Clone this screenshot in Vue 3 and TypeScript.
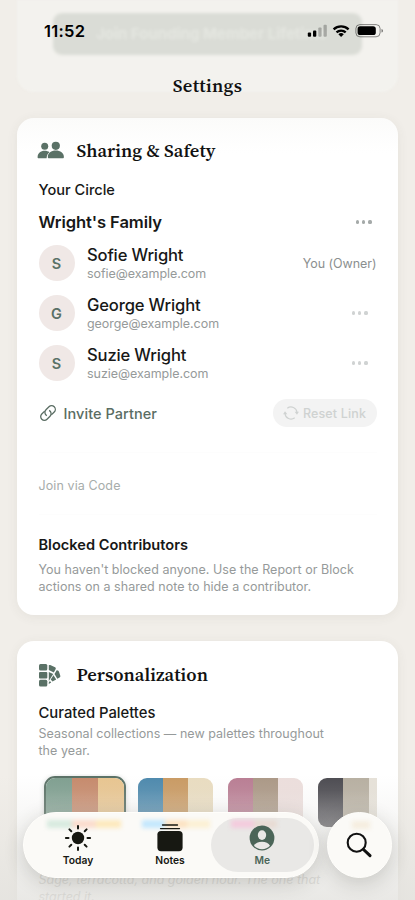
<script setup lang="ts">
interface Member { initial: string; name: string; email: string; owner?: boolean }
interface Palette { name: string; colors: string[]; selected?: boolean }

const members: Member[] = [
  { initial: 'S', name: 'Sofie Wright', email: 'sofie@example.com', owner: true },
  { initial: 'G', name: 'George Wright', email: 'george@example.com' },
  { initial: 'S', name: 'Suzie Wright', email: 'suzie@example.com' },
]

const palettes: Palette[] = [
  { name: 'signature', colors: ['#7f9f90', '#c68a6c', '#e8c590'], selected: true },
  { name: 'coastal', colors: ['#4d89ad', '#c99a63', '#e9dcc0'] },
  { name: 'rose', colors: ['#b97d93', '#ab9886', '#ecdedc'] },
  { name: 'desert', colors: ['#4c4b51', '#b7afa1', '#e6e1d8'] },
]
</script>

<template>
  <div class="screen">
    <main class="content">
      <section class="card sharing">
        <header class="heading">
          <svg class="people" width="28" height="20" viewBox="0 0 28 20">
            <circle cx="7.7" cy="5.2" r="3.5" />
            <path d="M.6 16.2c0-3.8 3-6.4 7.1-6.4 1.9 0 3.500.5 4.800 1.500-1.700 1.300-2.700 3-2.900 6H1.700c-.8 0-1.100-.4-1.100-1.100z" />
            <circle cx="18.8" cy="4.8" r="4.1" />
            <path d="M10.8 16c0-4 3.4-6.5 8-6.5s8.1 2.5 8.1 6.5c0 .9-.4 1.3-1.3 1.3H12c-.8 0-1.2-.4-1.2-1.3z" />
          </svg>
          <h2 class="h-share">Sharing &amp; Safety</h2>
        </header>
        <h3 class="circle">Your Circle</h3>
        <div class="family">
          <span>Wright's Family</span>
          <i class="dots strong"><b></b><b></b><b></b></i>
        </div>
        <ul class="members">
          <li v-for="m in members" :key="m.email">
            <span class="avatar">{{ m.initial }}</span>
            <div class="who">
              <strong>{{ m.name }}</strong>
              <small>{{ m.email }}</small>
            </div>
            <span v-if="m.owner" class="owner">You (Owner)</span>
            <i v-else class="dots"><b></b><b></b><b></b></i>
          </li>
        </ul>
        <div class="invite">
          <svg width="18" height="18" viewBox="0 0 18 18">
            <g transform="rotate(-45 9 9)">
              <path d="M8 5.300H3.900a3.700 3.700 0 0 0 0 7.400h4.300a3.700 3.700 0 0 0 3.500-4.800" />
              <path d="M10 12.700h4.100a3.700 3.700 0 0 0 0-7.400H9.800a3.700 3.700 0 0 0-3.500 4.800" />
            </g>
          </svg>
          <span class="partner">Invite Partner</span>
          <button class="reset">
            <svg width="16" height="16" viewBox="0 0 16 16">
              <path d="M4.3 3.2A6 6 0 0 1 14 7.5M11.7 12.8A6 6 0 0 1 2 8.5" />
              <path class="tip" d="M11.7 6.8h4.2L14 9.8zM.1 9.2h4.2L2 6.2z" />
            </svg>
            <span>Reset Link</span>
          </button>
        </div>
        <div class="join">Join via Code</div>
        <h3 class="blocked">Blocked Contributors</h3>
        <p class="note">You haven't blocked anyone. Use the Report or Block<br>actions on a shared note to hide a contributor.</p>
      </section>

      <section class="card personal">
        <header class="heading">
          <svg class="swatch" width="28" height="26" viewBox="0 0 28 26">
            <rect x="2" y="2" width="8.3" height="6.6" rx="1.5" />
            <rect x="2" y="10" width="8.3" height="6.4" rx="1" />
            <rect x="2" y="17.8" width="8.3" height="6.7" rx="1.5" />
            <path d="M11.8 3.2q.6-.5 1.4-.1l4.9 2.2q1.1.5.6 1.6l-1.9 3.6-5-2.4z" />
            <path d="M11.8 9.9l4.4 2.1-4.4 7z" />
            <path d="M19.7 8.2l1.2.4q.8.3 1.1 1.2l1.3 4q.4 1.2-.7 1.8l-2.3 1.2-2.8-4.7z" />
            <path d="M16.5 13.2l2.7 4.3-3.7 2.1-1.8-2.1zM12.9 19l1.3 1.5-2.4 1.6v-1.5z" />
          </svg>
          <h2 class="h-personal">Personalization</h2>
        </header>
        <h3 class="curated">Curated Palettes</h3>
        <p class="season">Seasonal collections — new palettes throughout<br>the year.</p>
        <div class="palettes">
          <div v-for="p in palettes" :key="p.name" class="tile" :class="{ selected: p.selected }">
            <span v-for="c in p.colors" :key="c" :style="{ backgroundColor: c }"></span>
          </div>
        </div>
        <p class="about">Sage, terracotta, and golden hour. The one that<br>started it.</p>
      </section>
    </main>

    <div class="shade"></div>

    <header class="top">
      <div class="ghost-card"><div class="ghost-button">Join Founding Member Lifetime</div></div>
      <div class="status">
        <time>11:52</time>
        <svg width="78" height="18" viewBox="0 0 78 18">
          <rect x=".8" y="10.6" width="3.3" height="4.2" rx="1" />
          <rect x="6" y="8.4" width="3.3" height="6.4" rx="1" />
          <rect x="11.3" y="5.4" width="3.3" height="9.4" rx="1" opacity=".25" />
          <rect x="16.5" y="2.8" width="3.3" height="12" rx="1" opacity=".25" />
          <g fill="none" stroke="#000" stroke-width="2.3">
            <path d="M26.6 7.3a11 11 0 0 1 15 0" />
            <path d="M29.5 10.4a6.7 6.7 0 0 1 9.2 0" />
          </g>
          <path d="M31.4 12.2a4.2 4.2 0 0 1 5.4 0l-2.7 2.9z" />
          <rect x="48.9" y="2.6" width="24.2" height="12.2" rx="4" fill="none" stroke="#000" stroke-opacity=".45" />
          <rect x="50.6" y="4.3" width="18.2" height="8.8" rx="2.6" />
          <path d="M74.5 7v3.6c1-.3 1.5-.9 1.5-1.8s-.5-1.5-1.5-1.8z" opacity=".5" />
        </svg>
      </div>
      <h1>Settings</h1>
    </header>

    <nav class="dock">
      <div class="tabs">
        <div class="tab">
          <div class="glow g1"><i></i><i></i><i></i></div>
          <svg width="28" height="28" viewBox="0 0 28 28">
            <circle cx="14" cy="14" r="6.2" />
            <path class="ray" d="M14 1.9v2.6M14 23.5v2.6M1.9 14h2.6M23.5 14h2.6M5.4 5.4l1.9 1.9M20.7 20.7l1.9 1.9M22.6 5.4l-1.900 1.900M7.300 20.700l-1.900 1.900" />
          </svg>
          <span>Today</span>
        </div>
        <div class="tab">
          <div class="glow g2"><i></i><i></i><i></i></div>
          <svg width="28" height="28" viewBox="0 0 28 28">
            <rect x="1.400" y="7" width="25.200" height="20.200" rx="3.600" />
            <path d="M4.500 4.600h19M6.500 1h15" stroke="#171812" stroke-width="1.300" stroke-linecap="round" />
          </svg>
          <span>Notes</span>
        </div>
        <div class="tab active">
          <div class="glow g3"><i></i><i></i></div>
          <svg width="28" height="28" viewBox="0 0 28 28">
            <circle cx="14" cy="14" r="12.4" />
            <ellipse cx="14" cy="11.1" rx="4.2" ry="4.8" fill="#e9e8e6" />
            <path d="M6 21.700c1.300-2.700 4.300-4 8-4s6.700 1.300 8 4a11 11 0 0 1-16 0z" fill="#e9e8e6" />
          </svg>
          <span>Me</span>
        </div>
      </div>
      <div class="search">
        <div class="glow g4"></div>
        <svg width="28" height="28" viewBox="0 0 28 28">
          <circle cx="11.700" cy="11.700" r="9" />
          <path d="M18.500 18.500l6.500 6.200" />
        </svg>
      </div>
    </nav>
  </div>
</template>

<style>
html, body { margin: 0; overflow: hidden; background: #f1eee9; }
</style>

<style scoped>
* { box-sizing: border-box; }
h1, h2, h3, p, ul { margin: 0; padding: 0; }
.screen { position: relative; width: 415px; height: 900px; overflow: hidden; background: #f1eee9; font-family: Inter, "Liberation Sans", sans-serif; color: #171817; }
.content { padding: 118px 17px 0; display: flex; flex-direction: column; gap: 26px; }
.card { background: #fff; border-radius: 17px; padding: 18px 21.5px 0; box-shadow: 0 2px 12px rgba(70, 70, 50, .07); flex: none; }
.sharing { height: 497px; background: linear-gradient(#fbfbfa, #fff 35px); }
.personal { height: 380px; padding-top: 19px; }
.heading { height: 30px; display: flex; align-items: center; gap: 11px; margin-left: -1px; }
.heading svg { fill: #5a7166; flex: none; }
.heading .people { margin: 0 1px 0 -1px; }
.heading .swatch { margin: 0 .5px 0 -.5px; }
h1, h2 { font-family: "Source Serif 4", "Noto Serif", "Liberation Serif", serif; font-weight: 600; font-size: 18.5px; line-height: 30px; white-space: nowrap; color: #111; }
.h-share { letter-spacing: .05px; }
.h-personal { letter-spacing: .05px; }
h3 { font-size: 14.8px; line-height: 22px; font-weight: 500; white-space: nowrap; }
.circle { margin-top: 12px; font-size: 14.6px; }
.circle, .family span { position: relative; top: .5px; }
.family { margin-top: 8px; height: 28px; display: flex; align-items: center; justify-content: space-between; font-size: 16.6px; font-weight: 600; letter-spacing: -.1px; }
.family span { top: -.5px; }
.dots { display: flex; gap: 3px; margin-right: 9px; }
.dots b { width: 3.2px; height: 3.2px; border-radius: 50%; background: #d0d3d3; }
.strong { margin-right: 5px; }
.strong b { background: #a5aaa9; }
.members { list-style: none; margin-top: 2px; }
.members li { height: 50px; display: flex; align-items: center; }
.avatar { width: 36px; height: 36px; border-radius: 50%; background: #f0e8e6; color: #5a7166; font-size: 14.5px; font-weight: 600; display: grid; place-items: center; }
.who { margin-left: 12.5px; padding-top: 2px; display: flex; flex-direction: column; flex: 1; }
.who strong { font-size: 16.6px; line-height: 20px; font-weight: 500; letter-spacing: -.16px; }
.who small { font-size: 12.5px; line-height: 18px; color: #969a9a; letter-spacing: -.05px; }
.owner { font-size: 12.5px; color: #8b8f8f; letter-spacing: -.05px; }
.invite { margin-top: 10px; height: 30px; display: flex; align-items: center; color: #5a6d63; }
.invite > svg { fill: none; stroke: #5a6d63; stroke-width: 1.3; overflow: visible; }
.partner { margin-left: 7px; font-size: 14.5px; font-weight: 500; flex: 1; letter-spacing: .05px; }
.reset { height: 28px; width: 104px; padding: 0; border: 0; border-radius: 14px; background: #f3f3f3; color: #cfd2d1; font: 500 12.5px Inter, sans-serif; display: flex; align-items: center; justify-content: center; gap: 4px; letter-spacing: .15px; }
.reset svg { fill: none; stroke: #cfd2d1; stroke-width: 1.2; }
.reset .tip { fill: #cfd2d1; stroke: none; }
.join { margin-top: 24px; height: 63px; line-height: 66px; border-top: 1px solid #fdfdfd; border-bottom: 1px solid #fdfdfd; font-size: 12.5px; letter-spacing: .1px; color: #a7adab; }
.blocked { margin-top: 19px; font-size: 14.6px; font-weight: 600; }
.note, .season { color: #969a9a; font-size: 12.5px; line-height: 17px; white-space: nowrap; letter-spacing: .03px; }
.note { margin-top: 5px; }
.curated { margin-top: 12px; }
.season { margin-top: 1px; }
.palettes { margin-top: 15px; height: 56px; padding: 4px 5px 0; margin-right: -.5px; display: flex; align-items: flex-start; gap: 14.8px; overflow: hidden; }
.tile { display: flex; flex: none; width: 75.6px; height: 49px; border-radius: 9px; overflow: hidden; }
.tile span { flex: 1; background-image: linear-gradient(rgba(255, 255, 255, 0) 25%, rgba(255, 255, 255, .18)); }
.selected { width: 82px; height: 53px; margin: -2px -2.8px 0 0; border: 2.5px solid #5a7166; border-radius: 11px; box-shadow: 0 1px 5px rgba(70, 80, 70, .25); }
.about { margin-top: 41px; font-size: 12.5px; line-height: 17px; font-style: italic; color: #c9c9c7; white-space: nowrap; }
.shade { position: absolute; left: 0; right: 0; bottom: 0; height: 125px; background: linear-gradient(rgba(232, 231, 227, 0), rgba(226, 225, 221, .75)); }
.top { position: absolute; inset: 0 0 auto; height: 118px; }
.ghost-card { position: absolute; left: 17px; top: 0; width: 381px; height: 92px; background: #f3f2ee; border-radius: 0 0 17px 17px; filter: blur(1px); }
.ghost-button { position: absolute; left: 36px; top: 13px; width: 309px; height: 42px; border-radius: 9px; background: #dadcd6; color: #e5e7e1; font-size: 15px; font-weight: 700; line-height: 42px; padding-left: 43px; filter: blur(1px); white-space: nowrap; overflow: hidden; }
.status { position: absolute; inset: 22px 0 auto 44px; display: flex; align-items: center; height: 18px; }
.status time { font-size: 16.5px; font-weight: 600; letter-spacing: .3px; width: 263px; color: #000; }
h1 { position: absolute; top: 71px; width: 100%; text-align: center; letter-spacing: .3px; }
.dock { position: absolute; left: 22.5px; top: 812px; display: flex; gap: 8px; }
.tabs { width: 296px; height: 65.5px; border-radius: 33px; background: #fbfaf7; display: flex; padding: 4.5px 0 4.5px 8.5px; box-shadow: 0 5px 20px rgba(50, 50, 40, .2); border: 1px solid #fffefb; }
.tab { position: relative; flex: none; width: 92px; display: flex; flex-direction: column; align-items: center; padding-top: 6px; font-size: 10.3px; font-weight: 600; color: #171812; }
.tab svg { position: relative; fill: #171812; }
.tab span { position: relative; line-height: 15px; margin-top: 1px; }
.ray { stroke: #171812; stroke-width: 2; stroke-linecap: round; }
.active { width: 102.5px; margin-left: -5px; background: #e9e8e6; border-radius: 28px; color: #4b6558; }
.active svg { fill: #4b6558; }
.glow { position: absolute; display: flex; height: 8px; top: 2px; filter: blur(2px); }
.glow i { flex: 1; }
.g1 { left: 15px; width: 74px; }
.g1 i:nth-child(1) { background: #d7eadf; }
.g1 i:nth-child(2) { background: #fbdccd; }
.g1 i:nth-child(3) { background: #fde9bd; }
.g2 { left: 18px; width: 68px; }
.g2 i:nth-child(1) { background: #c3e7fd; }
.g2 i:nth-child(2) { background: #fce2c2; }
.g2 i:nth-child(3) { background: #fcf0d4; }
.g3 { left: 20px; width: 46px; }
.g3 i:nth-child(1) { background: #f3cbdd; }
.g3 i:nth-child(2) { background: #e8dbd3; }
.search { position: relative; width: 65.5px; height: 65.5px; border-radius: 50%; background: #fbfaf7; border: 1px solid #fffefb; display: grid; place-items: center; box-shadow: 0 5px 20px rgba(50, 50, 40, .2); }
.search svg { position: relative; fill: none; stroke: #111; stroke-width: 2.1; stroke-linecap: round; }
.search svg path { stroke-width: 3.1; }
.g4 { left: 24px; top: 8px; width: 18px; background: #f5eddf; }
</style>
